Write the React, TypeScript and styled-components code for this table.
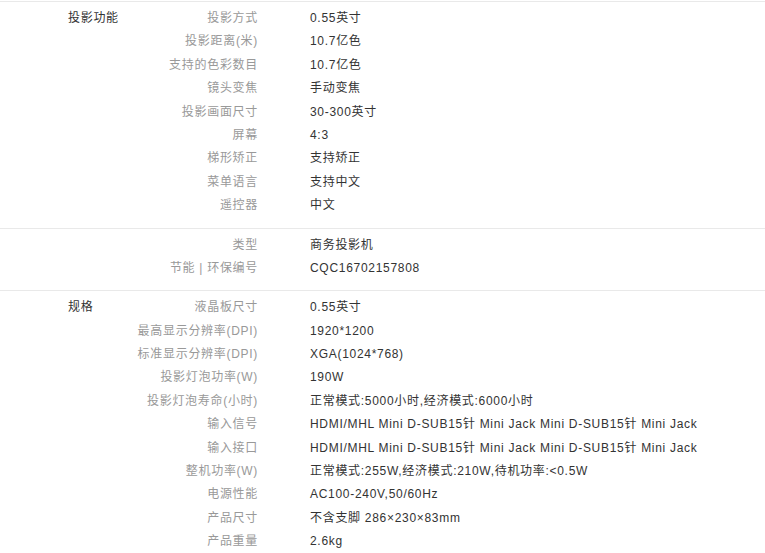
import React from "react";
import styled, { createGlobalStyle } from "styled-components";

const GlobalStyle = createGlobalStyle`
  html, body {
    margin: 0;
    padding: 0;
    background: #ffffff;
  }
  body {
    font-family: "Liberation Sans", "Noto Sans CJK SC", sans-serif;
    font-size: 12px;
  }
`;

type Row = [string, string];
type Section = { title: string; rows: Row[] };

const sections: Section[] = [
  {
    title: "投影功能",
    rows: [
      ["投影方式", "0.55英寸"],
      ["投影距离(米)", "10.7亿色"],
      ["支持的色彩数目", "10.7亿色"],
      ["镜头变焦", "手动变焦"],
      ["投影画面尺寸", "30-300英寸"],
      ["屏幕", "4:3"],
      ["梯形矫正", "支持矫正"],
      ["菜单语言", "支持中文"],
      ["遥控器", "中文"],
    ],
  },
  {
    title: "",
    rows: [
      ["类型", "商务投影机"],
      ["节能 | 环保编号", "CQC16702157808"],
    ],
  },
  {
    title: "规格",
    rows: [
      ["液晶板尺寸", "0.55英寸"],
      ["最高显示分辨率(DPI)", "1920*1200"],
      ["标准显示分辨率(DPI)", "XGA(1024*768)"],
      ["投影灯泡功率(W)", "190W"],
      ["投影灯泡寿命(小时)", "正常模式:5000小时,经济模式:6000小时"],
      ["输入信号", "HDMI/MHL Mini D-SUB15针 Mini Jack Mini D-SUB15针 Mini Jack"],
      ["输入接口", "HDMI/MHL Mini D-SUB15针 Mini Jack Mini D-SUB15针 Mini Jack"],
      ["整机功率(W)", "正常模式:255W,经济模式:210W,待机功率:<0.5W"],
      ["电源性能", "AC100-240V,50/60Hz"],
      ["产品尺寸", "不含支脚 286×230×83mm"],
      ["产品重量", "2.6kg"],
    ],
  },
];

const Page = styled.div`
  width: 765px;
  padding-top: 1px;
  letter-spacing: 0.7px;
`;

const Group = styled.section`
  display: flex;
  border-top: 1px solid #e9e9e9;
  padding: 5px 0 10px;
`;

const GroupTitle = styled.div`
  box-sizing: border-box;
  width: 130px;
  padding-left: 68px;
  height: 23.4px;
  line-height: 23.4px;
  color: #333333;
  white-space: nowrap;
`;

const List = styled.dl`
  margin: 0;
  flex: 1;
`;

const Item = styled.div`
  display: flex;
  height: 23.4px;
  line-height: 23.4px;
`;

const Key = styled.dt`
  width: 128px;
  text-align: right;
  color: #999999;
  white-space: nowrap;
`;

const Value = styled.dd`
  margin: 0;
  padding-left: 52px;
  color: #333333;
  white-space: nowrap;
`;

export default function App() {
  return (
    <>
      <GlobalStyle />
      <Page>
        {sections.map((s, i) => (
          <Group key={i}>
            <GroupTitle>{s.title}</GroupTitle>
            <List>
              {s.rows.map(([k, v], j) => (
                <Item key={j}>
                  <Key>{k}</Key>
                  <Value>{v}</Value>
                </Item>
              ))}
            </List>
          </Group>
        ))}
      </Page>
    </>
  );
}
